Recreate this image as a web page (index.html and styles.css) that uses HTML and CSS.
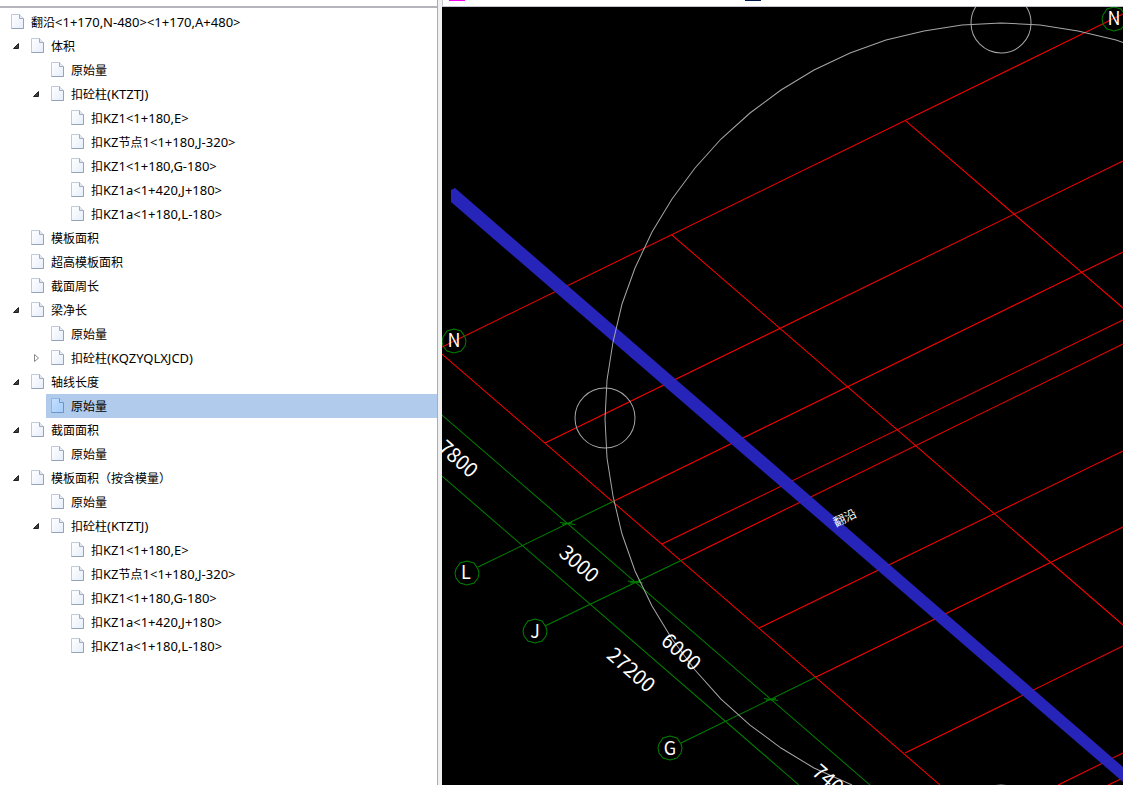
FILE: index.html
```
<!DOCTYPE html>
<html lang="zh-CN">
<head>
  <meta charset="UTF-8">
  <meta name="viewport" content="width=device-width, initial-scale=1.0">
  <title>翻沿</title>
  <link rel="stylesheet" href="styles.css">
</head>
<body>
  <svg class="defs" aria-hidden="true">
    <defs>
      <linearGradient id="paper" x1="0" y1="0" x2="1" y2="1">
        <stop offset="0" stop-color="#fff"/>
        <stop offset="1" stop-color="#e6eefb"/>
      </linearGradient>
      <linearGradient id="paperOn" x1="0" y1="0" x2="1" y2="1">
        <stop offset="0" stop-color="#c4e0ff"/>
        <stop offset="1" stop-color="#a4ccf8"/>
      </linearGradient>
      <symbol id="doc" viewBox="0 0 13 16">
        <path d="M.5 .5h8l4 4v10H.5z" fill="url(#paper)" stroke="#c0cad8"/>
        <path d="M12.500 4.500v10H.5" fill="none" stroke="#94a3b8"/>
        <path d="M8.500 .5v4h4" fill="#e4eaf3" stroke="#a0adbf"/>
      </symbol>
      <symbol id="docOn" viewBox="0 0 13 16">
        <path d="M.5 .5h8l4 4v10H.5z" fill="url(#paperOn)" stroke="#8fb4e0"/>
        <path d="M12.500 4.500v10H.5" fill="none" stroke="#6c94c8"/>
        <path d="M8.500 .5v4h4" fill="#b4d4f8" stroke="#6c94c8"/>
      </symbol>
      <symbol id="open" viewBox="0 0 8 8"><path d="M6.500 1.500v5h-5z" fill="#404040" stroke="#222"/></symbol>
      <symbol id="closed" viewBox="0 0 8 8"><path d="M2.500 .5v7L6.500 4z" fill="#fff" stroke="#898989"/></symbol>
    </defs>
  </svg>

  <div class="app">
    <aside class="side">
      <div class="strip"></div>
      <ul class="tree" id="tree"></ul>
    </aside>
    <main class="view">
      <div class="strip tools"><i class="tool pink"></i><i class="tool blue"></i></div>
      <svg class="drawing" viewBox="442 7 681 778" preserveAspectRatio="xMinYMin slice" role="img" aria-label="翻沿">
        <!-- axes -->
        <g class="red">
          <path d="M442 347L1123 14M545 443L1123 161M614 501L1123 252M662 544L1123 320M682 560L1123 344M759 628L1123 451M816 677L1123 527M905 753L1123 646M1058 785L1123 753M1108 785L1123 778"/>
          <path d="M442 354L940 785M672 235L1123 625M906 121L1123 308"/>
        </g>
        <!-- dimension lines -->
        <g class="green">
          <path d="M442 415L870 785M442 476L799 785M478 567L614 501M545 626L682 560M681 743L816 677"/>
          <path d="M560 522.500L575 524.500M562 524.500L572 522.500M628 581L643 583M630 583L640 581M764 698.500L778 700.500M766 700.500L776 698.500"/>
          <path id="ring" d="M454 329l7 2 4 6 1 4-1 5-4 5-7 2-7-2-4-5-1-5 1-4 4-6z"/>
          <use href="#ring" x="13" y="232"/>
          <use href="#ring" x="81" y="290"/>
          <use href="#ring" x="216" y="407"/>
          <use href="#ring" x="660" y="-322"/>
        </g>
        <!-- beam -->
        <path class="beam" d="M451 190L455 188L1123 767V782L451 202z"/>
        <g class="arc">
          <path d="M1152 53L1116 40L1078 31L1040 25L1001 23L962 25L924 31L886 40L850 53L814 70L781 90L750 113L721 139L695 168L672 199L652 232L635 268L622 304L613 342L607 380L605 419L607 458L613 496L622 534L635 571L652 606L672 639L695 670L721 699L750 725L781 748L814 768L852 785"/>
          <circle cx="605" cy="418" r="30"/>
          <circle cx="1001" cy="23" r="30"/>
          <circle cx="1001" cy="815" r="30"/>
        </g>
        <g class="axis">
          <text x="454" y="347">N</text>
          <text x="466" y="579">L</text>
          <text x="535" y="638">J</text>
          <text x="670" y="755">G</text>
          <text x="1114" y="25">N</text>
        </g>
        <g class="dim">
          <text transform="translate(458 459) rotate(41)" y="7">7800</text>
          <text transform="translate(579 564) rotate(41)" y="7">3000</text>
          <text transform="translate(681 652) rotate(41)" y="7">6000</text>
          <text transform="translate(631 670) rotate(41)" y="7">27200</text>
          <text transform="translate(832 783) rotate(41)" y="7">7400</text>
        </g>
        <text class="tag" transform="translate(845 518) rotate(-26)" y="4">翻沿</text>
      </svg>
    </main>
  </div>
  <script src="tree.js"></script>
</body>
</html>
```

FILE: styles.css
```
* { box-sizing: border-box; }
body { margin: 0; background: #f0f0f0; color: #000; font-family: "Noto Sans", "Noto Sans CJK SC", sans-serif; }
.defs { position: absolute; width: 0; height: 0; }
.app { display: grid; grid-template-columns: 39% 1fr; gap: 4px; height: 100vh; overflow: hidden; }
.side { display: flex; flex-direction: column; background: #fff; border-right: 1px solid #acacac; }
.strip { height: 8px; flex: none; background: #fff; border-bottom: 2px solid #b4b4ba; }

.tree { list-style: none; margin: 0; padding: 2px 0 0; font-size: 13px; }
.row { display: flex; align-items: center; height: 24px; padding-left: 11px; white-space: nowrap; }
.twist { width: 8px; height: 8px; margin-right: 11px; flex: none; }
.doc { width: 13px; height: 16px; flex: none; margin-right: 3px; }
.label { flex: 1; height: 24px; line-height: 24px; padding-left: 4px; }
.cjk { font-size: 12px; }
.d1 { padding-left: 12px; }
.d2 { padding-left: 32px; }
.d3 { padding-left: 52px; }
.selected { background: linear-gradient(#b1cbec, #b1cbec) 46px 0 no-repeat; }

.view { display: flex; flex-direction: column; min-width: 0; background: #000; }
.tools { height: 7px; display: flex; border-bottom: 1px solid #c4c4d0; border-left: 1px solid #c4c4d0; }
.tool { height: 1px; width: 16px; }
.pink { background: #f0f; margin-left: 6px; }
.blue { background: #001a50; margin-left: 280px; }
.drawing { display: block; width: 100%; flex: 1; min-height: 0; }
.drawing path, .drawing circle { fill: none; stroke-width: 1; }
.red { stroke: #f00; }
.green { stroke: #008000; }
.arc { stroke: #a6a6a6; }
.drawing .beam { fill: #2926c4; fill-opacity: .95; }
.drawing text { fill: #fff; text-anchor: middle; font-family: "Noto Sans CJK SC", sans-serif; }
.axis { font-size: 18px; }
.dim { font-size: 20px; }
.tag { font-size: 12px; }
```

FILE: tree.js
```
// [depth, label, state]
const rows = [
  [0, '翻沿<1+170,N-480><1+170,A+480>'],
  [1, '体积', 'open'],
  [2, '原始量'],
  [2, '扣砼柱(KTZTJ)', 'open'],
  [3, '扣KZ1<1+180,E>'],
  [3, '扣KZ节点1<1+180,J-320>'],
  [3, '扣KZ1<1+180,G-180>'],
  [3, '扣KZ1a<1+420,J+180>'],
  [3, '扣KZ1a<1+180,L-180>'],
  [1, '模板面积'],
  [1, '超高模板面积'],
  [1, '截面周长'],
  [1, '梁净长', 'open'],
  [2, '原始量'],
  [2, '扣砼柱(KQZYQLXJCD)', 'closed'],
  [1, '轴线长度', 'open'],
  [2, '原始量', 'selected'],
  [1, '截面面积', 'open'],
  [2, '原始量'],
  [1, '模板面积（按含模量）', 'open'],
  [2, '原始量'],
  [2, '扣砼柱(KTZTJ)', 'open'],
  [3, '扣KZ1<1+180,E>'],
  [3, '扣KZ节点1<1+180,J-320>'],
  [3, '扣KZ1<1+180,G-180>'],
  [3, '扣KZ1a<1+420,J+180>'],
  [3, '扣KZ1a<1+180,L-180>']
];

const esc = s => s.replace(/</g, '&lt;').replace(/>/g, '&gt;');

document.getElementById('tree').innerHTML = rows.map(([depth, label, state]) => {
  // Chinese runs are set one size smaller than the codes
  const text = label.split(/([^\x20-\x7e]+)/).map((part, i) => i % 2 ? `<span class="cjk">${part}</span>` : esc(part)).join('');
  const arrow = state === 'open' || state === 'closed' ? `<use href="#${state}"/>` : '';
  const twist = depth ? `<svg class="twist">${arrow}</svg>` : '';
  const icon = state === 'selected' ? 'docOn' : 'doc';
  return `<li class="row d${depth} ${state || ''}">${twist}<svg class="doc"><use href="#${icon}"/></svg><span class="label">${text}</span></li>`;
}).join('');
```
